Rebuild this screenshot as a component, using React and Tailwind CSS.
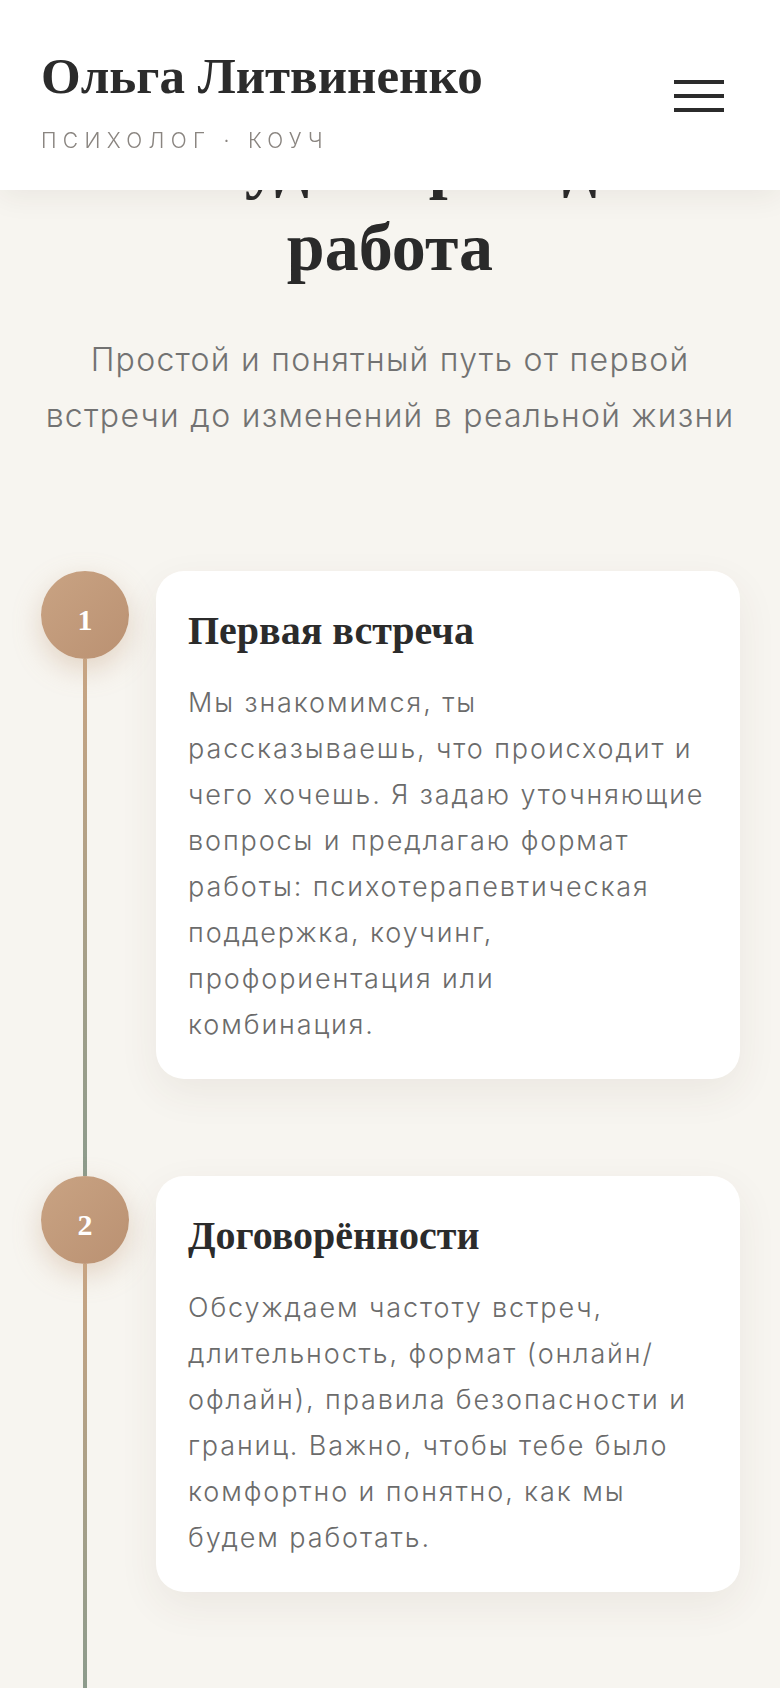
import React from "react";

const steps = [
  {
    n: 1,
    title: "Первая встреча",
    text: (
      <>
        Мы знакомимся, ты рассказываешь, что происходит и чего хочешь. Я задаю уточняющие вопросы и предлагаю формат
        работы: психотерапевтическая поддержка, коучинг, профориентация или
        <br />
        комбинация.
      </>
    ),
  },
  {
    n: 2,
    title: "Договорённости",
    text: "Обсуждаем частоту встреч, длительность, формат (онлайн/офлайн), правила безопасности и границ. Важно, чтобы тебе было комфортно и понятно, как мы будем работать.",
  },
];

const serif = "font-['Liberation_Serif',serif]";

function Header() {
  return (
    <header className="fixed top-0 inset-x-0 z-20 h-[190px] bg-white shadow-[0_6px_28px_rgba(60,45,30,0.07)] flex items-start justify-between pl-[41px] pr-[56px] pt-[51px]">
      <div>
        <div className={`${serif} text-[51px] leading-none font-bold text-[#2b2b2b]`}>
          Ольга Литвиненко
        </div>
        <div className="mt-[28px] text-[21px] leading-none font-light tracking-[0.3em] text-[#8a8580]">
          ПСИХОЛОГ · КОУЧ
        </div>
      </div>
      <button type="button" aria-label="Меню" className="mt-[29px] flex flex-col gap-[10px]">
        <span className="block w-[50px] h-[4px] bg-[#2b2b2b]" />
        <span className="block w-[50px] h-[4px] bg-[#2b2b2b]" />
        <span className="block w-[50px] h-[4px] bg-[#2b2b2b]" />
      </button>
    </header>
  );
}

function Step({ n, title, text }) {
  return (
    <div className="flex gap-[27px]">
      <div className="w-[88px] shrink-0 flex flex-col items-center">
        <div
          className={`${serif} w-[88px] h-[88px] shrink-0 rounded-full bg-gradient-to-br from-[#c9a383] to-[#ba9172] shadow-[0_10px_28px_rgba(190,150,115,0.35)] flex items-center justify-center pt-[8px] text-white text-[30px] font-bold`}
        >
          {n}
        </div>
        <div className="w-[4px] flex-1 bg-gradient-to-b from-[#c8a482] to-[#8c9b8c]" />
      </div>
      <div className="flex-1 pb-[97px]">
        <div className="bg-white rounded-[28px] px-[32px] pt-[36px] pb-[31px] shadow-[0_14px_40px_rgba(80,60,40,0.07)]">
          <h3 className={`${serif} text-[40px] leading-[47px] font-bold text-[#2b2b2b]`}>{title}</h3>
          <p className="mt-[26px] text-[27px] leading-[46px] font-light text-[#6b6b6b] tracking-[0.07em]">
            {text}
          </p>
        </div>
      </div>
    </div>
  );
}

export default function App() {
  return (
    <div className="relative h-[1688px] overflow-hidden bg-[#f7f5f0] font-['Inter',sans-serif]">
      <Header />
      <main className="pt-[121px] px-[40px]">
        <h2 className={`${serif} text-center text-[68px] leading-[84px] font-bold text-[#2a2a2a]`}>
          Как будет проходить работа
        </h2>
        <p className="mt-[43px] text-center text-[32px] leading-[56px] font-light text-[#727272] tracking-[0.04em]">
          Простой и понятный путь от первой встречи до изменений в реальной жизни
        </p>
        <div className="mt-[127px] pl-[1px]">
          {steps.map((s) => (
            <Step key={s.n} {...s} />
          ))}
        </div>
      </main>
    </div>
  );
}
